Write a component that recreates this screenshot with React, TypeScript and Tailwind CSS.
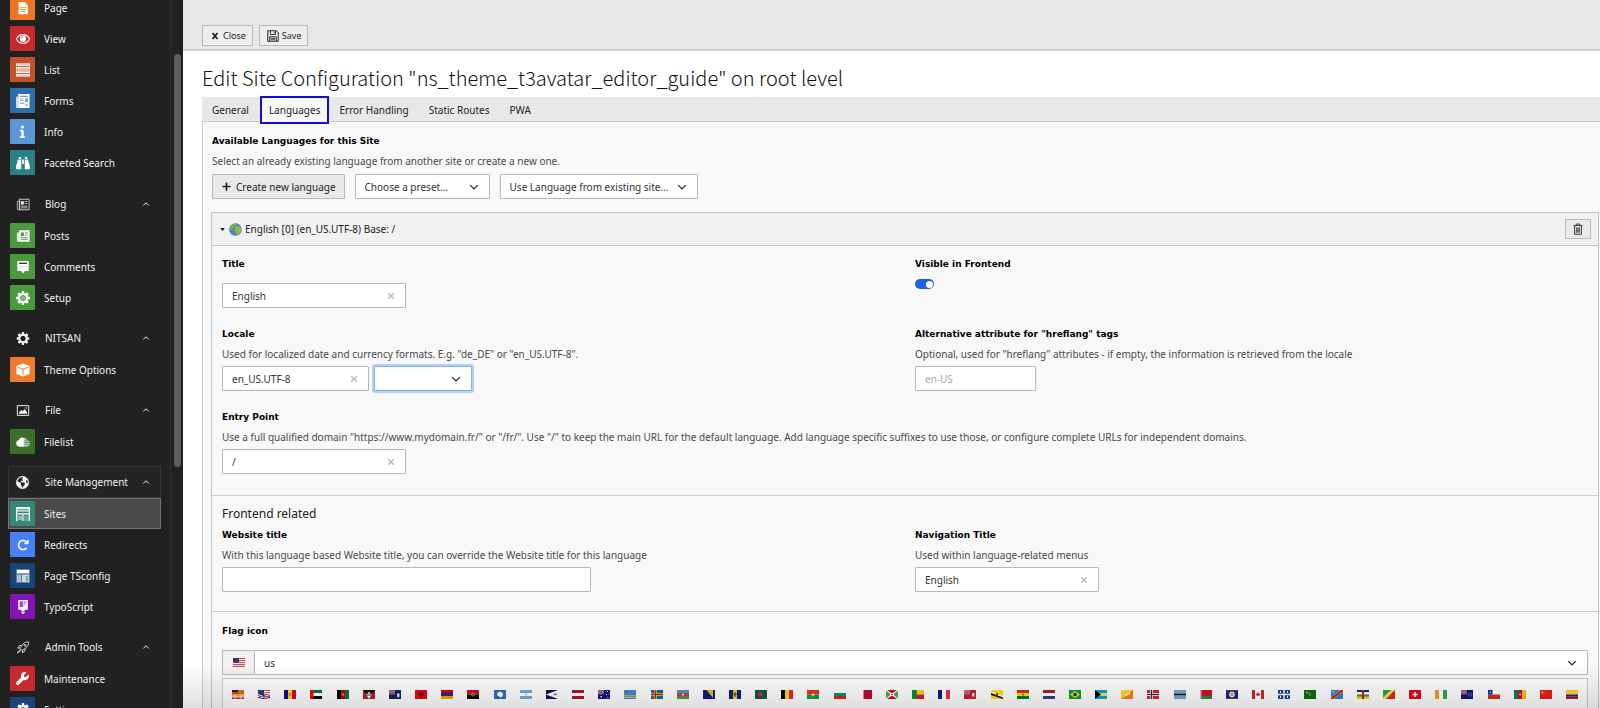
import React, { ReactNode } from 'react';
import { FaBinoculars, FaInfo, FaWrench, FaEarthAmericas, FaArrowRotateRight } from 'react-icons/fa6';

/* ---------- icons ---------- */

function Svg({ children, className = 'size-4' }: { children: ReactNode; className?: string }) {
  return (
    <svg viewBox="0 0 16 16" className={className} fill="currentColor" aria-hidden="true">
      {children}
    </svg>
  );
}

const PageIcon = () => (
  <Svg>
    <path d="M3 1h7l3.500 3.500V15H3z" />
    <path d="M10 1v3.500h3.500z" fill="#f9c9a4" />
    <path d="M5 7h6.500v1H5zm0 2.200h6.500v1H5zm0 2.200h6.500v1H5z" fill="#ee7625" />
  </Svg>
);
const ViewIcon = () => (
  <Svg>
    <path d="M8 3c3.500 0 6.200 2.100 7.500 5-1.300 2.900-4 5-7.500 5S1.800 10.900.500 8C1.800 5.100 4.500 3 8 3z" fill="none" stroke="currentColor" strokeWidth="1.200" />
    <circle cx="8" cy="7.600" r="3.700" />
    <path d="M5.900 7.300a2.200 2.200 0 0 1 2.100-1.900" stroke="#cf2b31" strokeWidth=".9" fill="none" />
  </Svg>
);
const ListIcon = () => (
  <Svg>
    {[1, 5, 9, 13].map((y) => (
      <g key={y}>
        <rect x="0" y={y - 0.5} width="16" height="3" />
        <rect x="1" y={y + 0.5} width="1.200" height="1" fill="#c2522b" />
        <rect x="3.500" y={y + 0.5} width="11.500" height="1" fill="#e3a48e" />
      </g>
    ))}
  </Svg>
);
const FormsIcon = () => (
  <Svg>
    <path d="M0 3h2.500v13H1a1 1 0 0 1-1-1z" opacity=".75" />
    <path d="M2.500 0H15.500v16H2.500z" />
    <path d="M4.500 2h9v1.500h-9zM4.500 5h4v1h-4zm0 2h4v1h-4zM10.500 5h3v4h-3zM4.500 10h5v1h-5zM10.500 12h3v1.500h-3z" fill="#2f6eaa" opacity=".7" />
  </Svg>
);
const NewsIcon = ({ bg, outline = false }: { bg: string; outline?: boolean }) => (
  <Svg>
    <path d="M1 4h3v10.500H2a1 1 0 0 1-1-1z" fill={outline ? 'none' : 'currentColor'} stroke={outline ? 'currentColor' : 'none'} opacity=".8" />
    <path d="M3.500 1.500h12v13h-12z" fill={outline ? 'none' : 'currentColor'} stroke={outline ? 'currentColor' : 'none'} />
    <path d="M5.500 4h3.500v4H5.500zM10 4h3.500v1H10zm0 2.500h3.500v1H10zM5.500 9.500h8v1h-8zm0 2.200h8v1h-8z" fill={outline ? 'currentColor' : bg} />
  </Svg>
);
const CommentIcon = () => (
  <Svg>
    <path d="M1.500 1h13v11.500H10L8 15.300 6 12.500H1.500z" />
    <path d="M3.500 3h9v1.600h-9z" fill="#2c3a26" />
    <path d="M3.500 6.500h9v.9h-9zm0 2.100h9v.9h-9z" fill="#cfd8cb" />
  </Svg>
);
const GearIcon = ({ hub = false }: { hub?: boolean }) => (
  <Svg>
    <g>
      {[0, 45, 90, 135].map((a) => (
        <rect key={a} x="6.400" y="0" width="3.200" height="16" rx=".6" transform={`rotate(${a} 8 8)`} mask="url(#gear-hole)" />
      ))}
      <circle cx="8" cy="8" r="4.700" fill="none" stroke="currentColor" strokeWidth="2.600" />
    </g>
    {hub && <circle cx="8" cy="8" r="2.600" fill="#b9dcb3" opacity=".5" />}
    <mask id="gear-hole">
      <rect width="16" height="16" fill="#fff" />
      <circle cx="8" cy="8" r="3.500" fill="#000" />
    </mask>
  </Svg>
);
const BoxIcon = () => (
  <Svg>
    <path d="M8 .500l7.500 2.800v9.400L8 15.500.500 12.700V3.300z" />
    <path d="M2 4.800l6 2.200 6-2.200M8 7v6.500" stroke="#ee7a2b" fill="none" strokeWidth="1.100" />
  </Svg>
);
const ImageIcon = () => (
  <Svg>
    <path d="M1 2h14v12H1z" fill="none" stroke="currentColor" strokeWidth="1.200" />
    <path d="M3 12v-1.500L6 7.500l1.500 1.500L10 6l3 4v2z" />
    <circle cx="11.800" cy="4.900" r="1" />
  </Svg>
);
const CloudIcon = () => (
  <Svg>
    <path d="M3.800 13.300a3.800 3.800 0 0 1-.6-7.500A4 4 0 0 1 9 3.300v10z" />
    <path d="M9 3.300c1.700-.5 3.300.7 3.400 2.500 2 0 3.600 1.500 3.600 3.700s-1.500 3.800-3.500 3.800H9z" opacity=".6" />
    <path d="M10 6.500h4M10 8.500h6M10 10.500h5" stroke="#3a7029" strokeWidth=".6" />
  </Svg>
);
const SitesIcon = () => (
  <Svg>
    <path d="M0 0h16v6H0z" opacity=".9" />
    <path d="M0 0h1.600v16H0zM14.400 0H16v16h-1.600zM0 7.200h16v1.500H0z" />
    <path d="M2.500 10H7v5H2.500z" opacity=".45" />
    <path d="M8.500 10h5v6h-5z" opacity=".25" />
    <path d="M1.600 2.700h12.800v.9H1.600zM1.600 5.200h12.800v1.600H1.600z" fill="#35877a" />
    <path d="M7.300 8.700h1.200V16H7.300z" />
  </Svg>
);
const LayoutIcon = () => (
  <Svg>
    <path d="M0 0h16v16H0z" opacity=".25" />
    <path d="M1 1h14v4H1z" />
    <path d="M1 6.500h5V15H1z" opacity=".55" />
    <path d="M7 6.500h8V15H7z" opacity=".75" />
    <path d="M11 8h3v6h-3z" fill="#7aa9b4" />
  </Svg>
);
const BrushIcon = () => (
  <Svg>
    <path d="M2.500 0h11v11H9.700v3.300a1.700 1.700 0 0 1-3.400 0V11H2.500z" />
    <path d="M4 1.500h4.200V8H4z" fill="#8414b5" opacity=".75" />
    <path d="M8.800 1.500h3.400L8.800 8z" fill="#8414b5" opacity=".45" />
    <path d="M7.400 12.500h1.200v1.800H7.400z" fill="#8414b5" />
  </Svg>
);
const RocketIcon = () => (
  <Svg>
    <g fill="none" stroke="currentColor" strokeLinejoin="round">
      <path d="M15 1c-4 0-7 1.500-9 5.500l-1.500 3 2 2 3-1.500c4-2 5.500-5 5.500-9z" />
      <path d="M6.500 5.500H3.800L1.500 8.800l3-.3M10.500 9.500v2.700l-3.300 2.300.3-3M4.500 10.500l-3.500 4.500 4.500-3.500" />
      <circle cx="10.600" cy="5.400" r="1.200" />
    </g>
  </Svg>
);
const CloseIcon = ({ className }: { className?: string }) => (
  <Svg className={className}>
    <path d="M3 2l10 12M13 2L3 14" stroke="currentColor" strokeWidth="3.600" />
  </Svg>
);
const ThinCloseIcon = () => (
  <Svg className="size-[10px]">
    <path d="M3.500 3.500l9 9M12.500 3.500l-9 9" stroke="currentColor" strokeWidth="2" />
  </Svg>
);
const SaveIcon = () => (
  <Svg className="size-[12px]">
    <path d="M1 1h11.500L15 3.500V15H1z" fill="none" stroke="currentColor" strokeWidth="1.300" />
    <path d="M4.500 1v5h7V1M3.500 15V9h9v6M9.500 2.500v2M5 11h6M5 13h6" fill="none" stroke="currentColor" strokeWidth="1.200" />
  </Svg>
);
const PlusIcon = () => (
  <Svg className="size-[11px]">
    <path d="M8 2v12M2 8h12" stroke="currentColor" strokeWidth="2.400" />
  </Svg>
);
const Chevron = ({ up = false, className = 'size-[10px]' }: { up?: boolean; className?: string }) => (
  <Svg className={className}>
    <path d={up ? 'M2.500 11L8 5.500l5.500 5.500' : 'M2 5l6 6 6-6'} fill="none" stroke="currentColor" strokeWidth="2" />
  </Svg>
);
const TrashIcon = () => (
  <Svg className="size-[12px]">
    <path d="M2 3.500h12M5.500 3V1.500h5V3M3.500 4v11h9V4M6.300 6v7M8 6v7M9.700 6v7" fill="none" stroke="currentColor" strokeWidth="1.200" />
  </Svg>
);
const GlobeFlag = () => (
  <Svg className="size-[13px]">
    <circle cx="8" cy="8" r="7.800" fill="#4d86c6" />
    <path d="M3 2.500C5 .800 8 .500 9.500 1L8 4 5 6.500 4 9 1.500 7.500C1 6 2 3.500 3 2.500z" fill="#7fae4a" />
    <path d="M8 5l4-1.500 3 2.500v3.500l-2.500 4-3 1.500-.500-4L6.500 9z" fill="#8fbe3f" />
  </Svg>
);

/* ---------- flags ---------- */

function Rows({ c }: { c: string[] }) {
  const h = 9 / c.length;
  return <>{c.map((f, i) => <rect key={i} x="0" y={i * h} width="12" height={h} fill={f} />)}</>;
}
function Cols({ c }: { c: string[] }) {
  const w = 12 / c.length;
  return <>{c.map((f, i) => <rect key={i} x={i * w} y="0" width={w} height="9" fill={f} />)}</>;
}
function Cross({ bg, outer, inner }: { bg: string; outer: string; inner: string }) {
  return (
    <>
      <rect width="12" height="9" fill={bg} />
      <path d="M4.500 0v9M0 4.500h12" stroke={outer} strokeWidth="2.600" />
      <path d="M4.500 0v9M0 4.500h12" stroke={inner} strokeWidth="1.200" />
    </>
  );
}
function Ensign({ bg, children }: { bg: string; children?: ReactNode }) {
  return (
    <>
      <rect width="12" height="9" fill={bg} />
      <path d="M0 0l6 4.500M6 0L0 4.500" stroke="#c9c3dc" strokeWidth=".8" />
      <path d="M3 0v4.500M0 2.250h6" stroke="#e6c9d6" strokeWidth="1.400" />
      <path d="M3 0v4.500M0 2.250h6" stroke="#cc1f36" strokeWidth=".9" />
      {children}
    </>
  );
}
const Bg = ({ c }: { c: string }) => <rect width="12" height="9" fill={c} />;

const flags: [string, ReactNode][] = [
  ['multiple', <><Rows c={['#222', '#dd2b1b', '#f3b717', '#c81e3c']} /><path d="M6 0h6v4.500H6z" fill="#f5a51b" /><path d="M6 1h6M6 3h6" stroke="#d62a1e" /><path d="M0 7h12M3 5v4M9 5v4" stroke="#fff" strokeWidth=".8" /></>],
  ['en-us-gb', <><Bg c="#2b3b7c" /><path d="M6 .5h6M6 2.500h6M6 4.500h6" stroke="#cf4a5c" /><path d="M6 1.500h6M6 3.500h6M0 4.500l12 4.500M12 4.500L0 9M7 2v7M0 6.500h12" stroke="#fff" /><path d="M7 3v6M1 6.500h11" stroke="#c81e3c" strokeWidth=".8" /></>],
  ['ad', <><Cols c={['#10069f', '#fedd00', '#d50032']} /><rect x="4.800" y="3" width="2.400" height="3" fill="#c6903c" /></>],
  ['ae', <><Rows c={['#00732f', '#fff', '#000']} /><path d="M0 0h3.500v9H0z" fill="#f00" /></>],
  ['af', <><Cols c={['#000', '#be0000', '#007a36']} /><circle cx="6" cy="4.500" r="1.400" fill="#d4705c" /></>],
  ['ag', <><Bg c="#ce1126" /><path d="M0 0h12L6 9z" fill="#111" /><path d="M2.500 3.500h7L8 6H4z" fill="#5aa6de" /><path d="M4 6h4L6 9z" fill="#fff" /><circle cx="6" cy="3" r="1.200" fill="#fcd116" /></>],
  ['ai', <Ensign bg="#12205f"><path d="M8 3.500h2.500v3L9.200 7.500 8 6.500z" fill="#e8eee5" /></Ensign>],
  ['al', <><Bg c="#e30613" /><path d="M3.500 2.500L6 3.500l2.500-1L8 5.500 6 7.500 4 5.500z" fill="#4a0606" /></>],
  ['am', <Rows c={['#d2001f', '#1b2a9c', '#f0a500']} />],
  ['ao', <><Rows c={['#cc092f', '#000']} /><circle cx="6" cy="4.500" r="1.500" fill="none" stroke="#d8a517" strokeWidth=".8" /></>],
  ['aq', <><Bg c="#2b6cc4" /><path d="M3.500 2.500l3-1 2.500 2-.3 2.700-2.500 1.500-1-1.500-2-.7z" fill="#fff" /></>],
  ['ar', <><Rows c={['#6cace4', '#fff', '#6cace4']} /><circle cx="6" cy="4.500" r=".9" fill="#e8b028" /></>],
  ['as', <><Bg c="#10125c" /><path d="M0 4.500L12 0v9z" fill="#fff" /><path d="M6.500 4.500l4-1.500v2.500z" fill="#8b6a44" /></>],
  ['at', <Rows c={['#a8142f', '#fff', '#a8142f']} />],
  ['au', <Ensign bg="#0d1280"><path d="M9 1h1v1H9zM8 4h1v1H8zM10.500 3.500h.8v.8h-.8zM9.300 7h1v1h-1zM2.500 6h1.400v1.400H2.500z" fill="#fff" /></Ensign>],
  ['aw', <><Bg c="#4189dd" /><path d="M0 5.800h12M0 7.500h12" stroke="#f9d616" strokeWidth=".8" /><path d="M2 1.500h1.300v1.300H2z" fill="#d21034" /></>],
  ['ax', <Cross bg="#1268ae" outer="#ffce00" inner="#d21034" />],
  ['az', <><Rows c={['#3f9fc9', '#e2323e', '#4d9a3b']} /><circle cx="6" cy="4.500" r="1" fill="#fff" /></>],
  ['ba', <><Bg c="#0d1a85" /><path d="M3.500 0H10v8z" fill="#f3b50f" /></>],
  ['bb', <><Cols c={['#00267f', '#ffc726', '#00267f']} /><path d="M6 2v5M5 3v2h2V3" stroke="#222" strokeWidth=".7" fill="none" /></>],
  ['bd', <><Bg c="#0d5a44" /><circle cx="5.500" cy="4.500" r="2.300" fill="#e02030" /></>],
  ['be', <Cols c={['#000', '#f7d417', '#ef2030']} />],
  ['bf', <><Rows c={['#ef2b2d', '#009e49']} /><path d="M6 2.500l1.800 3.700H4.200zM3.800 4h4.400L6 5.700z" fill="#fcd116" /></>],
  ['bg', <Rows c={['#fff', '#00966e', '#d62612']} />],
  ['bh', <><Bg c="#bf0a30" /><path d="M0 0h3l1 1-1 1 1 1-1 1 1 1-1 1 1 1-1 1 1 1H0z" fill="#fff" /></>],
  ['bi', <><Bg c="#ce1126" /><path d="M0 0v9l6-4.500zM12 0v9L6 4.500z" fill="#3fae49" /><path d="M0 0l12 9M12 0L0 9" stroke="#fff" strokeWidth="1.300" /><circle cx="6" cy="4.500" r="1.800" fill="#fff" /><circle cx="6" cy="4.500" r=".8" fill="#ce1126" /></>],
  ['bj', <><Rows c={['#fcd116', '#e8112d']} /><path d="M0 0h4.800v9H0z" fill="#0b8a3c" /></>],
  ['bl', <Cols c={['#001e96', '#fff', '#ed2939']} />],
  ['bm', <Ensign bg="#c01f38"><path d="M8 3h2.500v3.500H8z" fill="#e6dfe2" /></Ensign>],
  ['bn', <><Bg c="#f7e017" /><path d="M0 1.500L12 6v2L0 3.500z" fill="#fff" /><path d="M0 3l12 4.500V9L0 5z" fill="#111" /><path d="M5 3h2v3H5z" fill="#cf1126" /></>],
  ['bo', <><Rows c={['#d52b1e', '#f9e300', '#007934']} /><circle cx="6" cy="4.500" r="1.100" fill="#a05a2c" /></>],
  ['bq', <Rows c={['#ae1c28', '#fff', '#21468b']} />],
  ['br', <><Bg c="#009b3a" /><path d="M6 1l5 3.500L6 8 1 4.500z" fill="#fedf00" /><circle cx="6" cy="4.500" r="1.800" fill="#002776" /></>],
  ['bs', <><Rows c={['#00abc9', '#fae042', '#00abc9']} /><path d="M0 0l6 4.500L0 9z" fill="#000" /></>],
  ['bt', <><Bg c="#ff7b1c" /><path d="M0 0h12L0 9z" fill="#ffd520" /><path d="M3 7l2-3 2-.5 2.500-2-1 3L6 5.500z" fill="#fff" /></>],
  ['bv', <Cross bg="#d72636" outer="#fff" inner="#10306d" />],
  ['bw', <><Bg c="#6da9d2" /><path d="M0 4.500h12" stroke="#fff" strokeWidth="2.800" /><path d="M0 4.500h12" stroke="#000" strokeWidth="1.900" /></>],
  ['by', <><Bg c="#c8102e" /><path d="M0 6h12v3H0z" fill="#22883a" /><path d="M0 0h1.500v9H0z" fill="#e6a7a7" /></>],
  ['bz', <><Bg c="#0d2d7c" /><circle cx="6" cy="4.500" r="2.900" fill="#e5e5cf" /><circle cx="6" cy="4.500" r="1.500" fill="#8aa58a" /><path d="M0 .400h12M0 8.600h12" stroke="#ce1126" strokeWidth=".8" /></>],
  ['ca', <><Cols c={['#d81e2c', '#fff', '#fff', '#d81e2c']} /><path d="M6 2l1 1.500 1.200.5-1 1.800H4.800L3.800 4 5 3.500z" fill="#d81e2c" /></>],
  ['ca-qc', <><Bg c="#1b3f9b" /><path d="M6 0v9M0 4.500h12" stroke="#fff" strokeWidth="1.400" /><path d="M2.500 1v2M9.500 1v2M2.500 6v2M9.500 6v2" stroke="#fff" /></>],
  ['cc', <><Bg c="#0b6b17" /><circle cx="2.800" cy="2.500" r=".9" fill="#e8c515" /><path d="M6.800 3.300a1.300 1.300 0 1 0 0 2.400" stroke="#e8c515" strokeWidth=".6" fill="none" /></>],
  ['cd', <><Bg c="#2d7fe0" /><path d="M0 9L12 0" stroke="#f7d618" strokeWidth="2.800" /><path d="M0 9L12 0" stroke="#ce1021" strokeWidth="1.900" /><path d="M1.500 1h1.500v1.500H1.500z" fill="#f7d618" /></>],
  ['cf', <><Rows c={['#0b2a9c', '#fff', '#289728', '#ffce00']} /><path d="M5 0h2v9H5z" fill="#d21034" /></>],
  ['cg', <><Bg c="#dc241f" /><path d="M0 0h8L0 8z" fill="#1fa84a" /><path d="M8 0h4L3 9H0V7.500z" fill="#fbde4a" /></>],
  ['ch', <><Bg c="#e3061a" /><path d="M6 2v5M3.500 4.500h5" stroke="#fff" strokeWidth="1.600" /></>],
  ['ci', <Cols c={['#f79a20', '#fff', '#2ba84a']} />],
  ['ck', <Ensign bg="#10146c"><circle cx="9" cy="4.500" r="1.700" fill="none" stroke="#a5a9d8" strokeWidth=".5" /></Ensign>],
  ['cl', <><Rows c={['#fff', '#d52b1e']} /><path d="M0 0h4.500v4.500H0z" fill="#0039a6" /><path d="M1.700 1.700h1.200v1.200H1.700z" fill="#fff" /></>],
  ['cm', <><Cols c={['#0b7a5e', '#ce1126', '#f3c016']} /><circle cx="6" cy="4.500" r=".9" fill="#fcd116" /></>],
  ['cn', <><Bg c="#e81a1a" /><path d="M1.500 1.500h2v2h-2zM4.800 1h.8v.8h-.8zM5.300 3h.8v.8h-.8z" fill="#f8c21c" /></>],
  ['co', <Rows c={['#fcd116', '#fcd116', '#1a2a78', '#b01030']} />],
];

const UsFlag = () => (
  <svg viewBox="0 0 12 9" className="h-[9px] w-3" aria-hidden="true">
    <Rows c={['#c4505f', '#eedadd', '#c4505f', '#eedadd', '#c4505f', '#eedadd', '#c4505f', '#eedadd', '#c4505f']} />
    <path d="M0 0h6v4.500H0z" fill="#2c3566" />
  </svg>
);

/* ---------- sidebar ---------- */

type Entry = { label: string; icon: ReactNode; tile: string; active?: boolean };
type Group = { label?: string; icon?: ReactNode; framed?: boolean; entries: Entry[] };

const groups: Group[] = [
  {
    entries: [
      { label: 'Page', icon: <PageIcon />, tile: 'bg-[#ee7625]' },
      { label: 'View', icon: <ViewIcon />, tile: 'bg-[#c62a2f]' },
      { label: 'List', icon: <ListIcon />, tile: 'bg-[#c2522b]' },
      { label: 'Forms', icon: <FormsIcon />, tile: 'bg-[#2f6eaa]' },
      { label: 'Info', icon: <FaInfo className="size-[13px]" stroke="currentColor" strokeWidth="24" />, tile: 'bg-[#5b96d8]' },
      { label: 'Faceted Search', icon: <FaBinoculars className="size-[14px]" />, tile: 'bg-[#298085]' },
    ],
  },
  {
    label: 'Blog',
    icon: <NewsIcon bg="#212121" outline />,
    entries: [
      { label: 'Posts', icon: <NewsIcon bg="#4c983f" />, tile: 'bg-[#4c983f]' },
      { label: 'Comments', icon: <CommentIcon />, tile: 'bg-[#4c983f]' },
      { label: 'Setup', icon: <GearIcon hub />, tile: 'bg-[#4c983f]' },
    ],
  },
  {
    label: 'NITSAN',
    icon: <GearIcon />,
    entries: [{ label: 'Theme Options', icon: <BoxIcon />, tile: 'bg-[#ee7a2b]' }],
  },
  {
    label: 'File',
    icon: <ImageIcon />,
    entries: [{ label: 'Filelist', icon: <CloudIcon />, tile: 'bg-[#3a7029]' }],
  },
  {
    label: 'Site Management',
    icon: <FaEarthAmericas className="size-[13px]" />,
    framed: true,
    entries: [
      { label: 'Sites', icon: <SitesIcon />, tile: 'bg-[#35877a]', active: true },
      { label: 'Redirects', icon: <FaArrowRotateRight className="size-[12px]" />, tile: 'bg-[#4a80f5]' },
      { label: 'Page TSconfig', icon: <LayoutIcon />, tile: 'bg-[#1a4378]' },
      { label: 'TypoScript', icon: <BrushIcon />, tile: 'bg-[#8414b5]' },
    ],
  },
  {
    label: 'Admin Tools',
    icon: <RocketIcon />,
    entries: [
      { label: 'Maintenance', icon: <FaWrench className="size-[13px]" />, tile: 'bg-[#c62a2f]' },
      { label: 'Settings', icon: <GearIcon />, tile: 'bg-[#1a4378]' },
    ],
  },
];

function Sidebar() {
  return (
    <aside className="flex w-[183px] shrink-0 overflow-hidden bg-[#212121] text-[#f0f0f0]">
      <nav className="-mt-2 flex min-w-0 flex-1 flex-col gap-[9px] border-r border-[#2d2d2d] pr-[9px] pl-2">
        {groups.map((g, i) => (
          <div key={i} className="shrink-0 first:pb-px">
            {g.label && (
              <button
                type="button"
                className={`flex h-8 w-full items-center border pr-[10px] text-left ${g.framed ? 'border-[#343434] bg-[#242424]' : 'border-transparent'}`}
              >
                <span className="flex w-[27px] justify-center [&>svg]:max-h-[13px]">{g.icon}</span>
                <span className="flex-1 pl-[9px] whitespace-nowrap">{g.label}</span>
                <Chevron up className="size-2" />
              </button>
            )}
            {g.entries.map((e) => (
              <a
                key={e.label}
                href="#"
                className={`flex h-[31px] items-center border pl-px ${e.active ? 'border-[#777] bg-[#4a4a4a]' : 'border-transparent'}`}
              >
                <span className={`flex size-[25px] shrink-0 items-center justify-center rounded-[1px] text-white ${e.tile} [&>svg]:max-w-[14px]`}>
                  {e.icon}
                </span>
                <span className="pl-[9px] whitespace-nowrap">{e.label}</span>
              </a>
            ))}
          </div>
        ))}
      </nav>
      <div className="w-3 pt-[54px] pl-[3px]">
        <div className="h-[413px] w-[7px] rounded-full bg-[#5c5c5c]" />
      </div>
    </aside>
  );
}

/* ---------- form parts ---------- */

const box = 'h-[25px] rounded-[1px] border border-[#b8b8b8] bg-white text-[#333]';
const strong = "h-4 text-[9px] font-bold text-black font-['DejaVu_Sans',Verdana,sans-serif]";

function Field({ id, label, help, children }: { id: string; label: string; help?: string; children: ReactNode }) {
  return (
    <div className="px-[10px]">
      <label htmlFor={id} className={`block ${strong}`}>{label}</label>
      {help && <p className="mt-1 h-4 whitespace-nowrap text-[#4a4a4a]">{help}</p>}
      {children}
    </div>
  );
}

function ClearableInput({ id, value, width }: { id: string; value: string; width: string }) {
  return (
    <div className={`${box} ${width} flex items-center`}>
      <input id={id} defaultValue={value} className="h-full w-full min-w-0 flex-1 bg-transparent pl-[9px] outline-none" />
      <button type="button" aria-label="Clear" className="px-[9px] text-[#b5b5b5]"><ThinCloseIcon /></button>
    </div>
  );
}

function Select({ id, label, value, width, focused = false }: { id: string; label: string; value: string; width: string; focused?: boolean }) {
  return (
    <div className={`relative ${width}`}>
      <select
        id={id}
        aria-label={label}
        className={`h-[25px] w-full appearance-none rounded-[1px] border bg-white pr-6 pl-[9px] text-[#333] outline-none ${focused ? 'border-[#7fb0ea] ring-2 ring-[#b5cff5]' : 'border-[#b8b8b8]'}`}
      >
        <option>{value}</option>
      </select>
      <Chevron className="pointer-events-none absolute top-2 right-[11px] size-[10px] text-[#222]" />
    </div>
  );
}

const tabs = ['General', 'Languages', 'Error Handling', 'Static Routes', 'PWA'];

export default function App() {
  return (
    <div className="flex h-screen overflow-hidden bg-white font-['Noto_Sans','DejaVu_Sans',Verdana,sans-serif] text-[10px] leading-4 text-[#222]">
      <Sidebar />
      <main className="relative flex min-w-0 flex-1 flex-col overflow-hidden">
        <header className="flex h-[51px] shrink-0 items-end gap-[6px] border-b-2 border-[#cfcfcf] bg-[#e8e8e8] pb-[3px] pl-[19px] text-[9px]">
          <button type="button" className="flex h-[21px] items-center gap-1 border border-[#b9b9b9] bg-[#eee] pr-[6px] pl-2">
            <CloseIcon className="size-2" />
            Close
          </button>
          <button type="button" className="flex h-[21px] items-center gap-[3px] border border-[#b9b9b9] bg-[#eee] pr-[6px] pl-[7px]">
            <SaveIcon />
            Save
          </button>
        </header>

        <div className="flex flex-1 flex-col pt-[9px] pl-[19px]">
          <h1 className="h-[37px] text-[20px] leading-9 font-light whitespace-nowrap text-[#111] [font-family:'Noto_Sans_CJK_JP','Open_Sans',sans-serif]">
            Edit Site Configuration "ns_theme_t3avatar_editor_guide" on root level
          </h1>

          <div role="tablist" className="flex h-[25px] shrink-0 items-end border-b border-[#ccc] bg-[#e8e8e8]">
            {tabs.map((t) => (
              <button
                key={t}
                type="button"
                role="tab"
                aria-selected={t === 'Languages'}
                className={
                  t === 'Languages'
                    ? 'z-10 -mb-[3px] ml-px h-[28px] shrink-0 border-2 border-[#0d0ddd] bg-[#f8f8f8] px-[7px]'
                    : 'h-6 shrink-0 px-[10px] pt-[2px]'
                }
              >
                {t}
              </button>
            ))}
          </div>

          <section className="flex-1 border-l border-[#ccc] bg-[#f8f8f8] pt-[11px] pr-px pl-2">
            <div className="pl-px">
              <h2 className={strong}>Available Languages for this Site</h2>
              <p className="mt-1 h-4 text-[#4a4a4a]">Select an already existing language from another site or create a new one.</p>
              <div className="mt-[5px] flex gap-[10px]">
                <button type="button" className="flex h-[25px] items-center gap-1 rounded-[1px] border border-[#b9b9b9] bg-[#e9e9e9] px-2">
                  <PlusIcon />
                  Create new language
                </button>
                <Select id="preset" label="Preset" value="Choose a preset..." width="w-[135px]" />
                <Select id="existing" label="Existing site" value="Use Language from existing site..." width="w-[198px]" />
              </div>
            </div>

            <div className="mt-[13px] border border-[#c3c3c3]">
              <div className="flex h-[33px] items-center border-b border-[#c3c3c3] bg-[#f1f1f1] pr-[7px] pl-2">
                <button type="button" className="flex flex-1 items-center">
                  <svg viewBox="0 0 6 4" className="mr-1 h-[3px] w-[5px]" aria-hidden="true"><path d="M0 0h6L3 4z" /></svg>
                  <GlobeFlag />
                  <span className="pl-[3px]">English [0] (en_US.UTF-8) Base: /</span>
                </button>
                <button type="button" aria-label="Delete" className="flex h-5 w-[26px] items-center justify-center border border-[#b9b9b9] bg-[#eaeaea]">
                  <TrashIcon />
                </button>
              </div>

              <div className="grid grid-cols-2 gap-y-[18px] border-b border-[#ccc] pt-[10px] pb-[21px]">
                <Field id="title" label="Title">
                  <div className="mt-[11px]"><ClearableInput id="title" value="English" width="w-[184px]" /></div>
                </Field>
                <Field id="visible" label="Visible in Frontend">
                  <input
                    id="visible"
                    type="checkbox"
                    role="switch"
                    defaultChecked
                    className="mt-[7px] flex h-[10px] w-[19px] appearance-none items-center justify-end rounded-full bg-[#1f5fe0] px-px before:size-[7px] before:rounded-full before:bg-white before:content-['']"
                  />
                </Field>
                <Field id="locale" label="Locale" help={'Used for localized date and currency formats. E.g. "de_DE" or "en_US.UTF-8".'}>
                  <div className="mt-1 flex gap-[5px]">
                    <ClearableInput id="locale" value="en_US.UTF-8" width="w-[147px]" />
                    <Select id="locale-preset" label="Locale preset" value="" width="w-[98px]" focused />
                  </div>
                </Field>
                <Field id="hreflang" label={'Alternative attribute for "hreflang" tags'} help={'Optional, used for "hreflang" attributes - if empty, the information is retrieved from the locale'}>
                  <input id="hreflang" placeholder="en-US" className={`mt-1 block w-[121px] pl-[9px] placeholder:text-[#aaa] ${box}`} />
                </Field>
                <Field
                  id="entry"
                  label="Entry Point"
                  help={'Use a full qualified domain "https://www.mydomain.fr/" or "/fr/". Use "/" to keep the main URL for the default language. Add language specific suffixes to use those, or configure complete URLs for independent domains.'}
                >
                  <div className="mt-1"><ClearableInput id="entry" value="/" width="w-[184px]" /></div>
                </Field>
              </div>

              <div className="border-b border-[#ccc] pt-[10px] pb-[19px]">
                <h3 className="h-4 px-[10px] text-[12px]">Frontend related</h3>
                <div className="mt-[5px] grid grid-cols-2">
                  <Field id="website" label="Website title" help="With this language based Website title, you can override the Website title for this language">
                    <input id="website" className={`mt-1 block w-[369px] pl-[9px] ${box}`} />
                  </Field>
                  <Field id="nav" label="Navigation Title" help="Used within language-related menus">
                    <div className="mt-1"><ClearableInput id="nav" value="English" width="w-[184px]" /></div>
                  </Field>
                </div>
              </div>

              <div className="pt-[11px]">
                <Field id="flag" label="Flag icon">
                  <div className="mt-[11px] flex">
                    <span className="flex h-[25px] w-8 items-center justify-center border border-r-0 border-[#b8b8b8] bg-[#f1f1f1]"><UsFlag /></span>
                    <Select id="flag" label="Flag icon" value="us" width="flex-1" />
                  </div>
                  <div className="mt-[3px] flex h-20 items-start justify-between border border-[#ccc] bg-[#fdfdfd] px-[9px] pt-[11px]">
                    {flags.map(([code, art]) => (
                      <button key={code} type="button" aria-label={code} className="h-[9px] w-3">
                        <svg viewBox="0 0 12 9" className="block h-[9px] w-3">{art}</svg>
                      </button>
                    ))}
                  </div>
                </Field>
              </div>
            </div>
          </section>
        </div>
        <div className="pointer-events-none absolute inset-x-0 bottom-0 h-11 bg-gradient-to-b from-transparent to-black/12" />
      </main>
    </div>
  );
}
